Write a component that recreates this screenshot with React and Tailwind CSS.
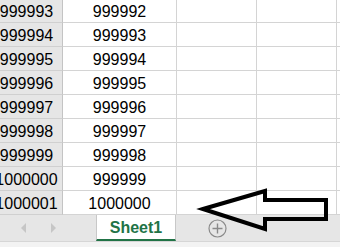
import React from "react";

const rows = [
  ["999993", "999992"],
  ["999994", "999993"],
  ["999995", "999994"],
  ["999996", "999995"],
  ["999997", "999996"],
  ["999998", "999997"],
  ["999999", "999998"],
  ["1000000", "999999"],
  ["1000001", "1000000"],
];

const App = () => {
  return (
    <div
      className="relative w-[340px] h-[247px] overflow-hidden bg-white text-black"
      style={{ fontFamily: '"Liberation Sans", Arial, sans-serif' }}
    >
      {/* grid */}
      <div className="-mt-[1px] -ml-[9px] flex flex-col">
        {rows.map(([head, val]) => (
          <div key={head} className="flex h-[24px] text-[16px]">
            <div className="w-[72px] shrink-0 flex items-center justify-center pt-[3px] bg-[#e6e6e6] border-r border-b border-r-[#c4c4c4] border-b-[#d0d0d0]">
              {head}
            </div>
            <div className="w-[114px] shrink-0 flex items-center justify-center pt-[3px] border-r border-b border-[#d4d4d4]">
              {val}
            </div>
            <div className="w-[80px] shrink-0 border-r border-b border-[#d4d4d4]" />
            <div className="w-[80px] shrink-0 border-r border-b border-[#d4d4d4]" />
            <div className="flex-1 border-b border-[#d4d4d4]" />
          </div>
        ))}
      </div>

      {/* sheet tab bar */}
      <div className="flex h-[27px] bg-[#e6e6e6] border-b border-[#d6d6d6]">
        <div className="w-[96px] flex items-center gap-[24px] pl-[21px]">
          <svg width="6" height="10" viewBox="0 0 6 10">
            <path d="M5 0 L0 5 L5 10 Z" fill="#c6c6c6" />
          </svg>
          <svg width="6" height="10" viewBox="0 0 6 10">
            <path d="M0 0 L5 5 L0 10 Z" fill="#c6c6c6" />
          </svg>
        </div>
        <div className="w-[80px] bg-white border-l border-r border-[#c8c8c8] border-b-[2px] border-b-[#217346] flex items-center justify-center pt-[1px]">
          <span className="text-[16px] font-bold text-[#217346]">Sheet1</span>
        </div>
        <div className="flex-1 flex items-center pl-[32px]">
          <svg width="19" height="19" viewBox="0 0 19 19">
            <circle cx="9.5" cy="9.5" r="8.5" fill="none" stroke="#8a8a8a" strokeWidth="1.2" />
            <path d="M9.5 4.5 V14.5 M4.5 9.5 H14.5" stroke="#8a8a8a" strokeWidth="1.4" />
          </svg>
        </div>
      </div>
      <div className="h-[10px] bg-[#f3f3f3]" />

      {/* annotation arrow */}
      <svg
        className="absolute left-0 top-0 pointer-events-none"
        width="340"
        height="247"
        viewBox="0 0 340 247"
      >
        <path
          d="M203 209 L265 191 L265 200 L326 200 L326 219 L265 219 L265 229 Z"
          fill="none"
          stroke="#000"
          strokeWidth="4"
          strokeLinejoin="miter"
        />
      </svg>
    </div>
  );
};

export default App;
